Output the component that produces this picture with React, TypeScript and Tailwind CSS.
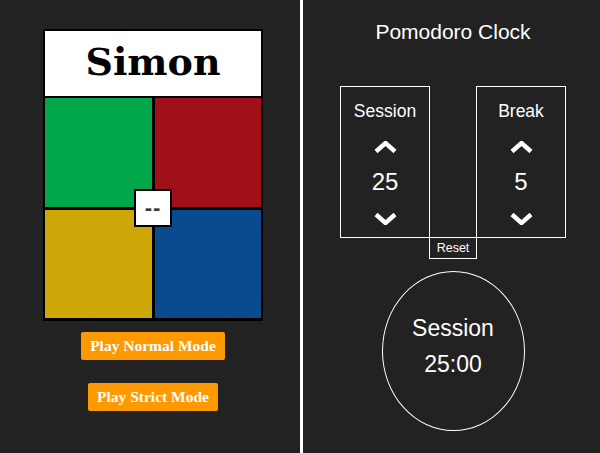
import React from "react";

function Chevron({ down = false }: { down?: boolean }) {
  return (
    <svg width="23" height="13" viewBox="0 0 23 13" className="block">
      <polyline
        points={down ? "2,2.5 11.5,11 21,2.5" : "2,10.5 11.5,2 21,10.5"}
        fill="none"
        stroke="white"
        strokeWidth="4.4"
        strokeLinejoin="miter"
      />
    </svg>
  );
}

function SimonGame() {
  return (
    <div className="flex h-full w-[300px] flex-col items-center pl-[6px] pt-[29px] font-['Liberation_Serif',serif]">
      <div className="flex w-[220px] flex-col gap-[2px] bg-black px-[2px] pb-[3px] pt-[2px]">
        <div className="flex h-[65px] items-center justify-center bg-white pb-[3px]">
          <h1 className="font-['DejaVu_Serif',serif] text-[38px] font-bold leading-none text-black">Simon</h1>
        </div>
        <div className="relative grid grid-cols-2 gap-[3px]">
          <div className="h-[109px] bg-[#00a74a]" />
          <div className="h-[109px] bg-[#9f1019]" />
          <div className="h-[108px] bg-[#cda608]" />
          <div className="h-[108px] bg-[#0a4a8e]" />
          <div className="absolute left-1/2 top-1/2 flex h-[38px] w-[38px] -translate-x-1/2 -translate-y-1/2 items-center justify-center border-2 border-black bg-white">
            <span className="font-['Liberation_Sans',sans-serif] text-[22px] font-bold leading-none tracking-[1px] text-[#3a3a3a]">--</span>
          </div>
        </div>
      </div>
      <button className="mt-[11px] h-[28px] rounded-[2px] bg-[#ff9900] px-[9px] text-[15.5px] font-bold text-white">
        Play Normal Mode
      </button>
      <button className="mt-[23px] h-[28px] rounded-[2px] bg-[#ff9900] px-[9px] text-[15.5px] font-bold text-white">
        Play Strict Mode
      </button>
    </div>
  );
}

function Setter({ label, value }: { label: string; value: number }) {
  return (
    <div className="flex h-[152px] w-[90px] flex-col items-center border border-white pt-[13px]">
      <p className="text-[17.5px] leading-[22px]">{label}</p>
      <div className="mt-[19px]">
        <Chevron />
      </div>
      <p className="mt-[15px] text-[24px] leading-[26px]">{value}</p>
      <div className="mt-[17px]">
        <Chevron down />
      </div>
    </div>
  );
}

function PomodoroClock() {
  return (
    <div className="flex h-full flex-1 flex-col items-center pl-[3px] pt-[20px] font-['Liberation_Sans',Arial,sans-serif] text-white">
      <h2 className="text-[21px] leading-[24px]">Pomodoro Clock</h2>
      <div className="mt-[42px] flex items-start">
        <Setter label="Session" value={25} />
        <div className="w-[46px] pt-[151px]">
          <button className="-mx-px flex h-[22px] w-[48px] items-center justify-center border border-white text-[12.5px] leading-none">
            Reset
          </button>
        </div>
        <Setter label="Break" value={5} />
      </div>
      <div className="mt-[12px] flex h-[160px] w-[143px] flex-col items-center justify-center rounded-[50%] border border-white pb-[10px]">
        <p className="text-[23px] leading-[30px]">Session</p>
        <p className="mt-[6px] text-[23px] leading-[30px]">25:00</p>
      </div>
    </div>
  );
}

export default function App() {
  return (
    <div className="flex h-[453px] w-[600px] bg-[#222222]">
      <SimonGame />
      <div className="h-full w-[3px] bg-white" />
      <PomodoroClock />
    </div>
  );
}
